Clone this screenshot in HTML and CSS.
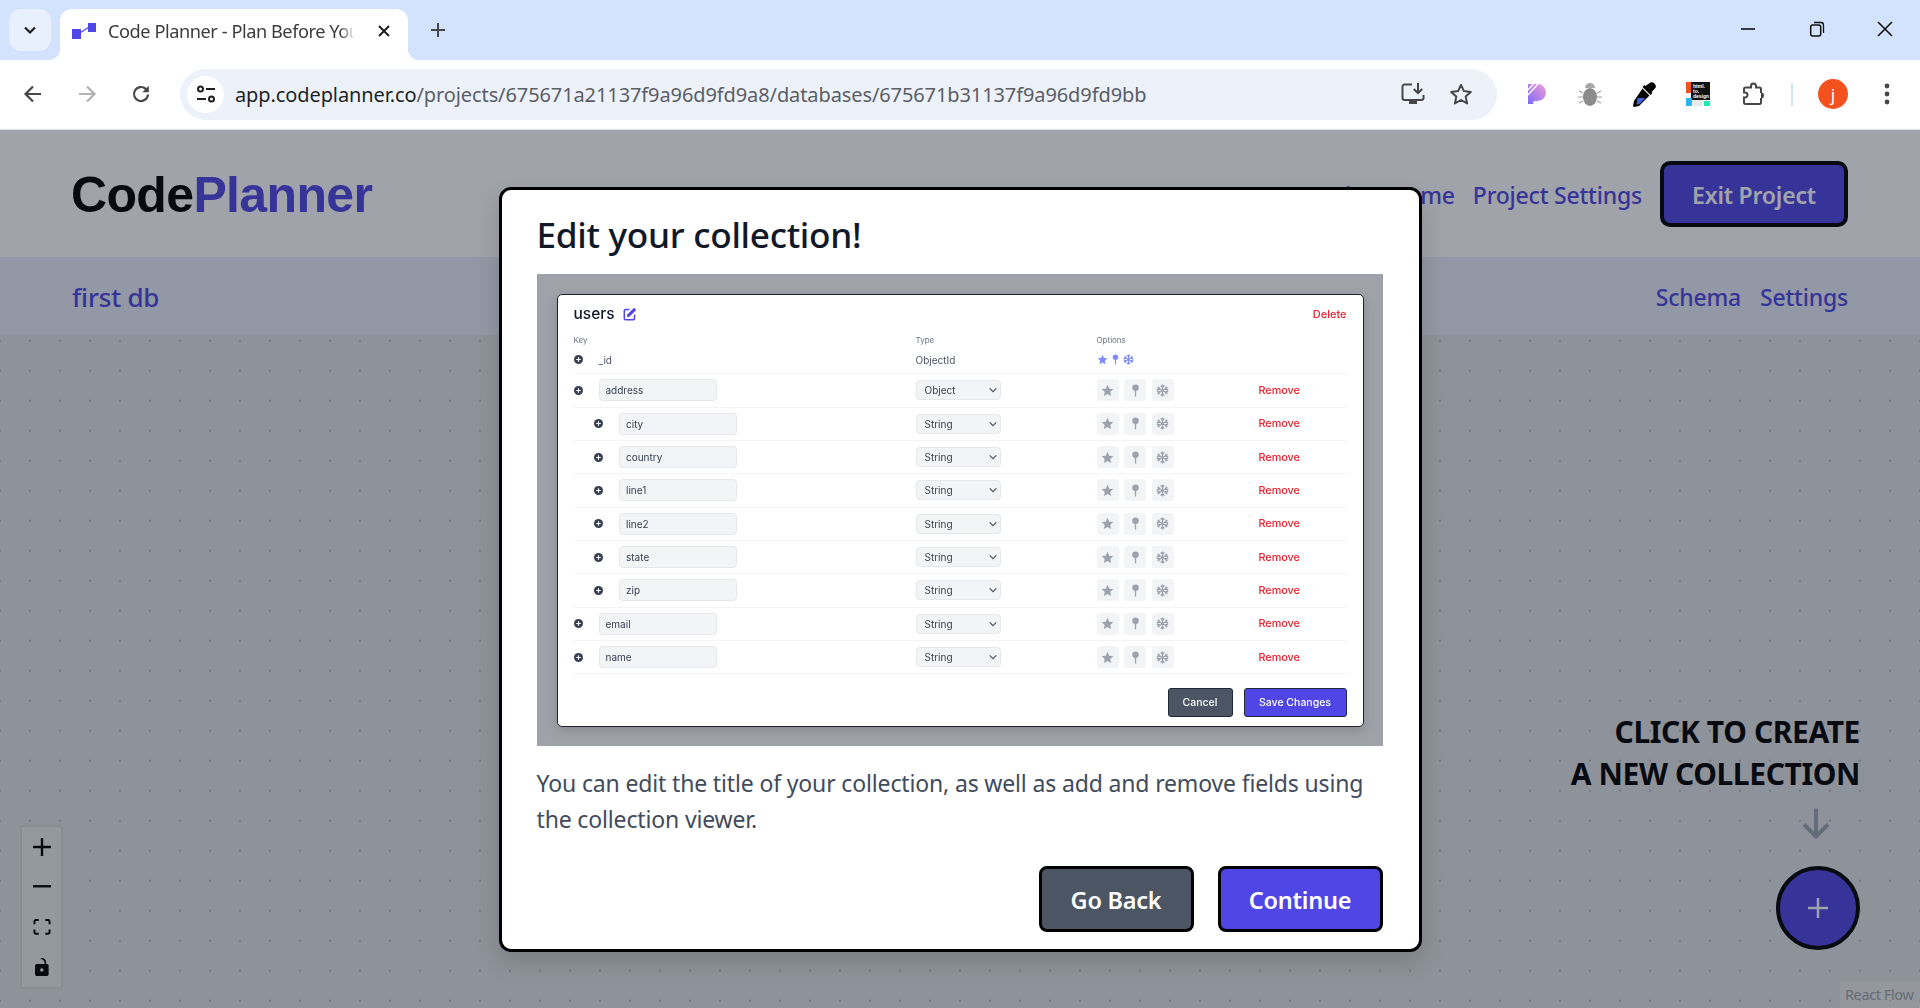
FILE: index.html
```html
<!DOCTYPE html>
<html lang="en">
<head>
<meta charset="utf-8">
<title>Code Planner - Plan Before You Code</title>
<link rel="stylesheet" href="styles.css">
</head>
<body>
<svg class="defs" width="0" height="0" aria-hidden="true">
  <symbol id="i-star" viewBox="0 0 24 24"><path fill="currentColor" d="M12 1.5l3.2 7.1 7.6.8-5.7 5.2 1.6 7.6L12 18.3l-6.7 3.9 1.6-7.6L1.2 9.4l7.6-.8z"/></symbol>
  <symbol id="i-pin" viewBox="0 0 24 24"><circle cx="12" cy="7" r="6" fill="currentColor"/><rect x="10.8" y="11" width="2.4" height="12" fill="currentColor"/></symbol>
  <symbol id="i-snow" viewBox="0 0 24 24"><g stroke="currentColor" stroke-width="2.4" fill="none"><path d="M12 1v22M2.5 6.5l19 11M21.5 6.5l-19 11"/><path d="M8.5 2.5L12 6l3.5-3.5M8.5 21.5L12 18l3.5 3.5M1.5 11l4.8-1.4L5 4.8M22.5 13l-4.8 1.4L19 19.2M22.5 11l-4.8-1.4L19 4.8M1.5 13l4.8 1.4L5 19.2"/></g></symbol>
  <symbol id="i-dot" viewBox="0 0 16 16"><circle cx="8" cy="8" r="8" fill="#374151"/><path d="M8 4v8M4 8h8" stroke="#fff" stroke-width="2"/></symbol>
  <symbol id="i-chev" viewBox="0 0 12 12"><path d="M2 4l4 4 4-4" fill="none" stroke="#4b5563" stroke-width="1.4"/></symbol>
</svg>

<header class="strip">
  <div class="tab-search"><svg width="16" height="16" viewBox="0 0 16 16"><path d="M3 5.5L8 10.5l5-5" fill="none" stroke="#1f1f1f" stroke-width="2.2"/></svg></div>
  <div class="tab">
    <svg class="favicon" width="24" height="16" viewBox="0 0 24 16"><rect x="0" y="6" width="9" height="10" fill="#4f46e5"/><rect x="16" y="0" width="8" height="9" fill="#4f46e5"/><path d="M8 10L17 4" stroke="#4f46e5" stroke-width="1.2"/></svg>
    <span class="tab-title">Code Planner - Plan Before You</span>
    <svg class="tab-close" width="14" height="14" viewBox="0 0 14 14"><path d="M2 2l10 10M12 2L2 12" stroke="#1f1f1f" stroke-width="2"/></svg>
  </div>
  <svg class="new-tab" width="18" height="18" viewBox="0 0 18 18"><path d="M9 2v14M2 9h14" stroke="#444746" stroke-width="2"/></svg>
  <div class="win-controls">
    <svg width="16" height="16" viewBox="0 0 16 16"><path d="M1 8h14" stroke="#111" stroke-width="1.6"/></svg>
    <svg width="16" height="16" viewBox="0 0 16 16"><rect x="1.7" y="4" width="10" height="11" rx="2" fill="none" stroke="#111" stroke-width="1.5"/><path d="M5 1.5h7a2.5 2.5 0 0 1 2.5 2.5v8" fill="none" stroke="#111" stroke-width="1.3"/></svg>
    <svg width="16" height="16" viewBox="0 0 16 16"><path d="M1 1l14 14M15 1L1 15" stroke="#111" stroke-width="1.6"/></svg>
  </div>
</header>

<nav class="toolbar">
  <svg class="tb-ico" width="20" height="20" viewBox="0 0 20 20"><path d="M18 10H3M10 2.5L2.5 10l7.5 7.5" fill="none" stroke="#474747" stroke-width="2.2"/></svg>
  <svg class="tb-ico" width="20" height="20" viewBox="0 0 20 20"><path d="M2 10h15M10 2.5l7.5 7.5-7.5 7.5" fill="none" stroke="#b3b3b3" stroke-width="2.2"/></svg>
  <svg class="tb-ico" width="20" height="20" viewBox="0 0 20 20"><path d="M17 10.5a7 7 0 1 1-2.2-5.6L17 7" fill="none" stroke="#474747" stroke-width="2.2"/><path d="M17.8 1.8v6.4h-6.4z" fill="#474747"/></svg>
  <div class="omnibox">
    <div class="site-chip"><svg width="20" height="20" viewBox="0 0 20 20"><g fill="none" stroke="#1f1f1f" stroke-width="2"><circle cx="4.5" cy="5" r="2.5"/><path d="M10 5h9M1 15h9"/><circle cx="15.5" cy="15" r="2.5"/></g></svg></div>
    <div class="url"><span class="url-host">app.codeplanner.co</span>/projects/675671a21137f9a96d9fd9a8/databases/675671b31137f9a96d9fd9bb</div>
    <svg class="omni-ico" width="24" height="24" viewBox="0 0 24 24"><path d="M11 2.5H3.500a2 2 0 0 0-2 2V16a2 2 0 0 0 2 2h17a2 2 0 0 0 2-2v-3" fill="none" stroke="#474747" stroke-width="2"/><path d="M8 19h8v3H8z" fill="#474747"/><path d="M17 1v10M12.800 7l4.200 4.200L21.200 7" fill="none" stroke="#474747" stroke-width="2"/></svg>
    <svg class="omni-ico star" width="24" height="24" viewBox="0 0 24 24"><path d="M12 2.800l2.900 6.300 6.900.8-5.100 4.700 1.400 6.800-6.100-3.400-6.100 3.400 1.400-6.800-5.100-4.700 6.900-.8z" fill="none" stroke="#474747" stroke-width="2" stroke-linejoin="round"/></svg>
  </div>
  <div class="extensions">
    <svg width="24" height="24" viewBox="0 0 24 24"><defs><linearGradient id="pg" x1="0" y1="1" x2="1" y2="0"><stop offset="0" stop-color="#7c6cf5"/><stop offset="1" stop-color="#f49ad8"/></linearGradient></defs><path d="M4 2h9.500a8.500 8.500 0 0 1 0 17H9.500v3H4z" fill="url(#pg)"/><path d="M4 8L9.500 2M4 13L14 2" stroke="#fff" stroke-width="1.300"/></svg>
    <svg width="24" height="26" viewBox="0 0 24 26"><ellipse cx="12" cy="16" rx="7" ry="9" fill="#8b8b8b"/><path d="M7 7a5 5 0 0 1 10 0z" fill="#a8a8a8"/><path d="M1 10l4 2M23 10l-4 2M0 16h5M24 16h-5M1 22l4-2M23 22l-4-2" stroke="#a0a0a0" stroke-width="1.200"/></svg>
    <svg width="24" height="25" viewBox="0 0 24 25"><path d="M17 1.500a3.500 3.500 0 0 1 5.500 5.500l-3 3 1 1-2 2-8-8 2-2 1 1z" fill="#000"/><path d="M10.500 6.500l7 7L7 24l-5 1-1-1 1-5z" fill="#000"/><path d="M5.500 16h8L7.500 22l-3 .5.500-3z" fill="#4263d8"/></svg>
    <svg width="24" height="24" viewBox="0 0 24 24"><rect width="24" height="24" fill="#fff"/><rect x="5" width="19" height="18" fill="#111"/><rect width="5" height="11" fill="#f4511e"/><rect y="16" width="6" height="8" fill="#29b6f6"/><rect x="18" y="19" width="6" height="5" fill="#1de9b6"/><rect x="7" y="18" width="10" height="6" fill="#e8e8e8"/><text x="7" y="5.500" class="ext-text">html.</text><text x="7" y="10.500" class="ext-text">to.</text><text x="7" y="15.500" class="ext-text">design</text></svg>
    <svg class="puzzle" width="24" height="24" viewBox="0 0 24 24"><path d="M19 11V7a1.500 1.500 0 0 0-1.500-1.500H14V4a2.500 2.500 0 0 0-5 0v1.500H3.500A1.500 1.500 0 0 0 2 7v3.500h1a2.500 2.500 0 0 1 0 5H2v5A1.500 1.500 0 0 0 3.500 22h14a1.500 1.500 0 0 0 1.500-1.500V16" fill="none" stroke="#474747" stroke-width="2"/><path d="M19 10.500a3 3 0 0 1 0 6z" fill="#474747"/></svg>
  </div>
  <span class="tb-divider"></span>
  <span class="avatar">j</span>
  <svg class="menu" width="6" height="26" viewBox="0 0 6 26"><circle cx="3" cy="5" r="2.400" fill="#474747"/><circle cx="3" cy="13" r="2.400" fill="#474747"/><circle cx="3" cy="21" r="2.400" fill="#474747"/></svg>
</nav>

<main class="app">
  <div class="app-header">
    <div class="logo">Code<span class="logo-accent">Planner</span></div>
    <div class="nav-links">
      <a class="nav-link">Project Home</a>
      <a class="nav-link">Project Settings</a>
      <a class="exit-btn">Exit Project</a>
    </div>
  </div>
  <div class="sub-header">
    <div class="db-name">first db</div>
    <div class="sub-links"><a class="nav-link">Schema</a><a class="nav-link">Settings</a></div>
  </div>
  <div class="canvas">
    <div class="flow-controls">
      <div class="flow-btn"><svg width="18" height="18" viewBox="0 0 32 32"><path d="M32 18.133H18.133V32h-4.266V18.133H0v-4.266h13.867V0h4.266v13.867H32z"/></svg></div>
      <div class="flow-btn"><svg width="18" height="3" viewBox="0 0 32 5"><path d="M0 0h32v4.200H0z"/></svg></div>
      <div class="flow-btn"><svg width="18" height="16" viewBox="0 0 32 30"><path d="M3.692 4.630c0-.530.400-.938.939-.938h5.215V0H4.708C2.130 0 0 2.054 0 4.630v5.216h3.692V4.631zM27.354 0h-5.200v3.692h5.170c.530 0 .984.400.984.939v5.215H32V4.631A4.624 4.624 0 0027.354 0zm.954 24.830c0 .532-.400.940-.939.940h-5.215v3.768h5.215c2.577 0 4.631-2.130 4.631-4.707v-5.139h-3.692v5.139zm-23.677.940c-.531 0-.939-.400-.939-.940v-5.138H0v5.139c0 2.577 2.130 4.707 4.708 4.707h5.138V25.770H4.631z"/></svg></div>
      <div class="flow-btn"><svg width="14" height="18" viewBox="0 0 25 32"><path d="M21.333 10.667H19.810V7.619C19.810 3.429 16.380 0 12.190 0c-4.114 1.828-1.370 2.133.305 2.438 1.676.305 4.420 2.590 4.420 5.181v3.048H3.047A3.056 3.056 0 000 13.714v15.238A3.056 3.056 0 003.048 32h18.285a3.056 3.056 0 003.048-3.048V13.714a3.056 3.056 0 00-3.048-3.047zM12.190 24.533a3.056 3.056 0 01-3.047-3.047 3.056 3.056 0 013.047-3.048 3.056 3.056 0 013.048 3.048 3.056 3.056 0 01-3.048 3.047z"/></svg></div>
    </div>
    <div class="create-hint">
      <div class="hint-text">CLICK TO CREATE<br>A NEW COLLECTION</div>
      <svg class="hint-arrow" width="28" height="32" viewBox="0 0 28 32"><path d="M14 1.500v28M2 17.500l12 12 12-12" fill="none" stroke="#9ca3af" stroke-width="4"/></svg>
      <button class="fab"><svg width="20" height="20" viewBox="0 0 20 20"><path d="M10 0v20M0 10h20" stroke="#fff" stroke-width="2.500"/></svg></button>
    </div>
    <div class="attribution">React Flow</div>
  </div>

  <div class="overlay">
    <section class="modal">
      <h2 class="modal-title">Edit your collection!</h2>
      <div class="shot">
        <div class="card">
          <div class="card-head">
            <div class="card-title">users
              <svg class="edit-ico" width="14" height="14" viewBox="0 0 14 14"><path d="M6.500 2.500H2.500a1.200 1.200 0 0 0-1.200 1.200v7.800a1.200 1.200 0 0 0 1.200 1.200h7.800a1.200 1.200 0 0 0 1.200-1.200V7.500" fill="none" stroke="#4f46e5" stroke-width="1.500"/><path d="M11 .8l2.200 2.200-6.600 6.600-2.800.6.600-2.800z" fill="#4f46e5"/></svg>
            </div>
            <span class="danger delete">Delete</span>
          </div>
          <div class="row labels"><span>Key</span><span>Type</span><span>Options</span><span></span></div>
          <div class="row id-row">
            <div class="key"><svg class="dot"><use href="#i-dot"/></svg><span class="id-name">_id</span></div>
            <span class="id-type">ObjectId</span>
            <div class="id-opts"><svg><use href="#i-star"/></svg><svg><use href="#i-pin"/></svg><svg><use href="#i-snow"/></svg></div>
            <span></span>
          </div>

          <div class="row field">
            <div class="key"><svg class="dot"><use href="#i-dot"/></svg><div class="input">address</div></div>
            <div class="select">Object<svg class="chev"><use href="#i-chev"/></svg></div>
            <div class="opts"><span class="opt"><svg><use href="#i-star"/></svg></span><span class="opt"><svg><use href="#i-pin"/></svg></span><span class="opt"><svg><use href="#i-snow"/></svg></span></div>
            <span class="danger">Remove</span>
          </div>
          <div class="row field nested">
            <div class="key"><svg class="dot"><use href="#i-dot"/></svg><div class="input">city</div></div>
            <div class="select">String<svg class="chev"><use href="#i-chev"/></svg></div>
            <div class="opts"><span class="opt"><svg><use href="#i-star"/></svg></span><span class="opt"><svg><use href="#i-pin"/></svg></span><span class="opt"><svg><use href="#i-snow"/></svg></span></div>
            <span class="danger">Remove</span>
          </div>
          <div class="row field nested">
            <div class="key"><svg class="dot"><use href="#i-dot"/></svg><div class="input">country</div></div>
            <div class="select">String<svg class="chev"><use href="#i-chev"/></svg></div>
            <div class="opts"><span class="opt"><svg><use href="#i-star"/></svg></span><span class="opt"><svg><use href="#i-pin"/></svg></span><span class="opt"><svg><use href="#i-snow"/></svg></span></div>
            <span class="danger">Remove</span>
          </div>
          <div class="row field nested">
            <div class="key"><svg class="dot"><use href="#i-dot"/></svg><div class="input">line1</div></div>
            <div class="select">String<svg class="chev"><use href="#i-chev"/></svg></div>
            <div class="opts"><span class="opt"><svg><use href="#i-star"/></svg></span><span class="opt"><svg><use href="#i-pin"/></svg></span><span class="opt"><svg><use href="#i-snow"/></svg></span></div>
            <span class="danger">Remove</span>
          </div>
          <div class="row field nested">
            <div class="key"><svg class="dot"><use href="#i-dot"/></svg><div class="input">line2</div></div>
            <div class="select">String<svg class="chev"><use href="#i-chev"/></svg></div>
            <div class="opts"><span class="opt"><svg><use href="#i-star"/></svg></span><span class="opt"><svg><use href="#i-pin"/></svg></span><span class="opt"><svg><use href="#i-snow"/></svg></span></div>
            <span class="danger">Remove</span>
          </div>
          <div class="row field nested">
            <div class="key"><svg class="dot"><use href="#i-dot"/></svg><div class="input">state</div></div>
            <div class="select">String<svg class="chev"><use href="#i-chev"/></svg></div>
            <div class="opts"><span class="opt"><svg><use href="#i-star"/></svg></span><span class="opt"><svg><use href="#i-pin"/></svg></span><span class="opt"><svg><use href="#i-snow"/></svg></span></div>
            <span class="danger">Remove</span>
          </div>
          <div class="row field nested">
            <div class="key"><svg class="dot"><use href="#i-dot"/></svg><div class="input">zip</div></div>
            <div class="select">String<svg class="chev"><use href="#i-chev"/></svg></div>
            <div class="opts"><span class="opt"><svg><use href="#i-star"/></svg></span><span class="opt"><svg><use href="#i-pin"/></svg></span><span class="opt"><svg><use href="#i-snow"/></svg></span></div>
            <span class="danger">Remove</span>
          </div>
          <div class="row field">
            <div class="key"><svg class="dot"><use href="#i-dot"/></svg><div class="input">email</div></div>
            <div class="select">String<svg class="chev"><use href="#i-chev"/></svg></div>
            <div class="opts"><span class="opt"><svg><use href="#i-star"/></svg></span><span class="opt"><svg><use href="#i-pin"/></svg></span><span class="opt"><svg><use href="#i-snow"/></svg></span></div>
            <span class="danger">Remove</span>
          </div>
          <div class="row field">
            <div class="key"><svg class="dot"><use href="#i-dot"/></svg><div class="input">name</div></div>
            <div class="select">String<svg class="chev"><use href="#i-chev"/></svg></div>
            <div class="opts"><span class="opt"><svg><use href="#i-star"/></svg></span><span class="opt"><svg><use href="#i-pin"/></svg></span><span class="opt"><svg><use href="#i-snow"/></svg></span></div>
            <span class="danger">Remove</span>
          </div>

          <div class="card-actions"><span class="mini-btn gray">Cancel</span><span class="mini-btn indigo">Save Changes</span></div>
        </div>
      </div>
      <p class="modal-text">You can edit the title of your collection, as well as add and remove fields using the collection viewer.</p>
      <div class="modal-actions"><button class="btn gray">Go Back</button><button class="btn indigo">Continue</button></div>
    </section>
  </div>
</main>
</body>
</html>
```

FILE: styles.css
```css
* { box-sizing: border-box; }
html, body { margin: 0; height: 100%; overflow: hidden; }
body { width: 1920px; height: 1008px; font-family: "Noto Sans", sans-serif; background: #fff; display: flex; flex-direction: column; }
.defs { position: absolute; }

/* browser chrome */
.strip { height: 60px; background: #d3e3fd; display: flex; align-items: flex-start; padding: 9px 0 0 9px; flex: none; }
.tab-search { width: 42px; height: 42px; border-radius: 12px; background: #e9f0fd; display: flex; align-items: center; justify-content: center; }
.tab { position: relative; width: 348px; height: 51px; margin-left: 9px; background: #fff; border-radius: 12px 12px 0 0; display: flex; align-items: center; padding: 0 15px 0 12px; }
.tab::before, .tab::after { content: ""; position: absolute; bottom: 0; width: 12px; height: 12px; }
.tab::before { left: -12px; background: radial-gradient(circle at 0 0, transparent 12px, #fff 12.5px); }
.tab::after { right: -12px; background: radial-gradient(circle at 100% 0, transparent 12px, #fff 12.5px); }
.favicon { flex: none; margin-top: -8px; }
.tab-title { margin: -8px 0 0 12px; width: 247px; white-space: nowrap; font-size: 18.2px; letter-spacing: -.45px; color: #3c3c3c; -webkit-mask-image: linear-gradient(90deg, #000 94%, transparent); mask-image: linear-gradient(90deg, #000 94%, transparent); }
.tab-close { margin: -8px 0 0 22px; flex: none; }
.new-tab { margin: 12px 0 0 21px; flex: none; }
.win-controls { margin-left: auto; padding-right: 27px; display: flex; gap: 52.5px; align-items: center; height: 40px; }

.toolbar { height: 70px; background: #fff; border-radius: 12px 12px 0 0; border-bottom: 1px solid #dcdfe3; display: flex; align-items: center; padding: 0 0 1px 23px; flex: none; }
.tb-ico { flex: none; margin-right: 34px; }
.tb-ico:nth-child(3) { margin-right: 29px; }
.omnibox { width: 1317px; height: 51px; background: #edf2fa; border-radius: 26px; display: flex; align-items: center; padding: 0 24px 0 7px; flex: none; }
.site-chip { width: 37px; height: 37px; border-radius: 50%; background: #fff; display: flex; align-items: center; justify-content: center; flex: none; }
.url { margin-left: 11px; font-size: 20px; color: #5b5e66; white-space: nowrap; flex: 1; letter-spacing: -.1px; }
.url-host { color: #1f1f1f; }
.omni-ico { flex: none; }
.omni-ico.star { margin-left: 24px; }
.extensions { display: flex; align-items: center; margin-left: 27px; gap: 30px; }
.puzzle { margin-left: 2px; }
.ext-text { font: 700 5px "Liberation Sans", sans-serif; fill: #fff; }
.tb-divider { width: 2px; height: 23px; background: #d3e3fd; margin-left: 25px; }
.avatar { width: 30px; height: 30px; border-radius: 50%; background: #f4511e; color: #fff; font-size: 17px; display: flex; align-items: center; justify-content: center; margin-left: 25px; }
.menu { margin-left: 36px; }

/* app */
.app { position: relative; flex: 1; display: flex; flex-direction: column; min-height: 0; }
.app-header { height: 127px; background: #fff; display: flex; align-items: center; justify-content: space-between; padding: 2px 72px 0 71px; flex: none; }
.logo { font: 700 50px "Liberation Sans", sans-serif; letter-spacing: -.65px; color: #000; }
.logo-accent { color: #4f46e5; }
.nav-links { display: flex; align-items: center; gap: 18px; margin-top: -2px; }
.nav-link { font-size: 23px; font-weight: 500; color: #4f46e5; letter-spacing: -.2px; white-space: nowrap; padding-top: 3px; }
.exit-btn { width: 188px; height: 66px; border: 4px solid #000; border-radius: 10px; background: #4f46e5; color: #fff; font-size: 23px; font-weight: 600; display: flex; align-items: center; justify-content: center; letter-spacing: -.2px; padding-top: 2px; }
.sub-header { height: 78px; background: #e8edf8; display: flex; align-items: center; justify-content: space-between; padding: 0 72px; flex: none; }
.db-name { font-size: 26px; font-weight: 500; color: #4f46e5; letter-spacing: -.2px; padding-top: 2px; }
.sub-links { display: flex; gap: 19px; margin-top: -2px; }
.canvas { position: relative; flex: 1; background-color: #e2e3e6; background-image: radial-gradient(circle, #b8b8be 1px, transparent 1.3px); background-size: 30px 30px; background-position: -15px -9.3px; }

.flow-controls { position: absolute; left: 22px; bottom: 21px; width: 39px; background: #eceef0; box-shadow: 0 0 2px 1px rgba(0, 0, 0, .08); }
.flow-btn { height: 40px; display: flex; align-items: center; justify-content: center; border-bottom: 1px solid #eee; }
.flow-btn svg { fill: #000; }
.create-hint { position: absolute; right: 60px; top: 376px; display: flex; flex-direction: column; align-items: flex-end; }
.hint-text { font-size: 30px; line-height: 42px; font-weight: 700; color: #000; text-align: right; letter-spacing: -.4px; }
.hint-arrow { margin: 12px 30px 0 0; display: block; }
.fab { width: 84px; height: 84px; margin-top: 27px; border-radius: 50%; border: 4px solid #000; background: #4f46e5; display: flex; align-items: center; justify-content: center; padding: 0; }
.attribution { position: absolute; right: 0; bottom: 0; width: 80px; height: 27px; padding-left: 5px; background: rgba(255, 255, 255, .3); color: #a3a3a3; font-size: 14.5px; line-height: 27px; white-space: nowrap; letter-spacing: -.4px; }

.overlay { position: absolute; inset: 0; background: rgba(17, 24, 39, .4); display: flex; align-items: center; justify-content: center; }
.modal { width: 923px; height: 765px; background: #fff; border: 3px solid #000; border-radius: 12px; padding: 0 36px 0 35px; box-shadow: 0 10px 25px rgba(0, 0, 0, .15); display: flex; flex-direction: column; }
.modal-title { margin: 0; height: 84px; padding-top: 20px; font-size: 35.2px; line-height: 48px; font-weight: 500; color: #111827; letter-spacing: -.3px; }
.shot { width: 846px; height: 472px; background: #9fa2a9; padding: 20px 19px 19px 20px; flex: none; }
.card { height: 433px; background: #fff; border: 1.5px solid #222; border-radius: 5px; padding: 0 16px; box-shadow: 0 4px 12px rgba(0, 0, 0, .15); display: flex; flex-direction: column; font-family: Inter, sans-serif; color: #374151; filter: blur(.2px); }
.card-head { height: 36px; display: flex; align-items: center; justify-content: space-between; padding-top: 2px; }
.card-title { font-size: 15.5px; font-weight: 500; color: #111827; display: flex; align-items: center; gap: 8px; }
.danger { color: #ef1f2c; font-size: 10.8px; font-weight: 500; }
.delete { font-size: 11px; }
.row { display: grid; grid-template-columns: 342px 181px 162px 88px; align-items: center; }
.labels { height: 18px; font-size: 8px; color: #6b7280; padding-top: 1px; }
.id-row { height: 25.8px; font-size: 10px; color: #4b5563; border-bottom: 1px solid #f3f4f6; padding-bottom: 2px; }
.field { height: 33.33px; border-bottom: 1px solid #f3f4f6; font-size: 10px; }
.key { display: flex; align-items: center; }
.dot { width: 9px; height: 9px; flex: none; }
.id-name { margin-left: 16px; }
.input { margin-left: 16px; width: 118px; height: 22px; background: #f3f4f6; border: 1px solid #e5e7eb; border-radius: 4px; display: flex; align-items: center; padding-left: 6px; }
.nested .key { padding-left: 20.5px; }
.select { width: 85px; height: 20px; background: #f3f4f6; border: 1px solid #e5e7eb; border-radius: 4px; display: flex; align-items: center; justify-content: space-between; padding: 0 2px 0 8px; }
.chev { width: 10px; height: 10px; }
.opts { display: flex; gap: 5.5px; }
.opt { width: 22px; height: 22px; border-radius: 3px; background: #f3f4f6; color: #9ca3af; display: flex; align-items: center; justify-content: center; }
.opt svg { width: 13px; height: 13px; }
.id-opts { display: flex; align-items: center; color: #818cf8; gap: 2px; }
.id-opts svg { width: 11px; height: 11px; }
.card-actions { display: flex; justify-content: flex-end; gap: 11px; margin-top: 14px; }
.mini-btn { height: 29px; border: 1px solid #1f2937; border-radius: 3px; color: #fff; font-size: 10.5px; font-weight: 500; display: flex; align-items: center; justify-content: center; }
.mini-btn.gray { width: 65px; background: #4b5563; }
.mini-btn.indigo { width: 103px; background: #4f46e5; }
.modal-text { margin: 19px 0 0; font-size: 23px; line-height: 36px; color: #414b5c; letter-spacing: -.15px; }
.modal-actions { margin-top: auto; margin-bottom: 17px; display: flex; justify-content: flex-end; gap: 24px; }
.btn { height: 66px; border: 3px solid #000; border-radius: 8px; color: #fff; font-family: inherit; font-size: 23.5px; font-weight: 600; padding: 2px 0 0; letter-spacing: -.25px; }
.btn.gray { width: 155px; background: #4b5563; }
.btn.indigo { width: 165px; background: #4f46e5; }
```
